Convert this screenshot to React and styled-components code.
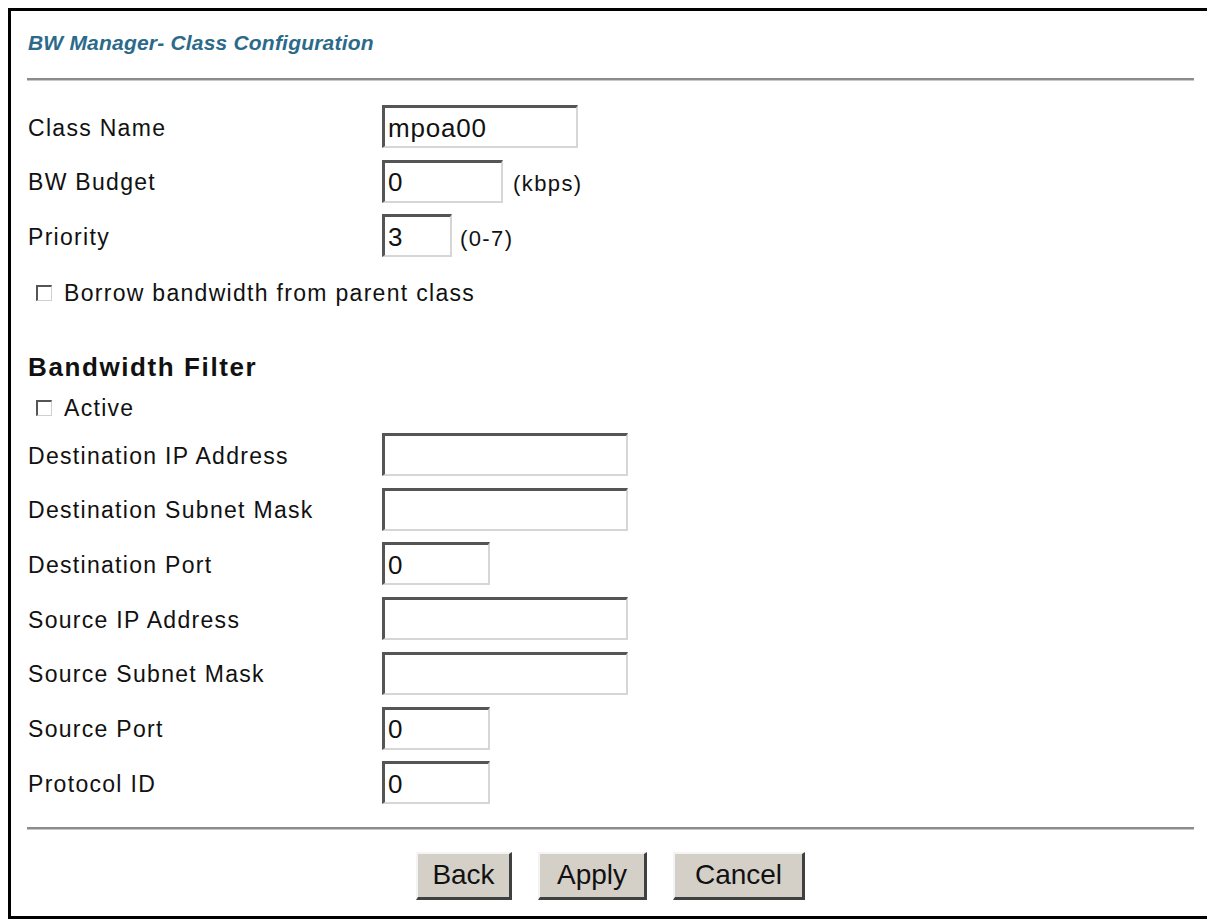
import React from 'react'
import styled, { createGlobalStyle } from 'styled-components'

const GlobalStyle = createGlobalStyle`
  body {
    margin: 8px;
    background: #fff;
    font-family: 'Liberation Sans', Arial, sans-serif;
    color: #111;
  }
`

const Frame = styled.div`
  border: 3px solid #000;
  box-sizing: border-box;
  height: 911px;
  padding: 20px 16px 0;
  width: 1205px;
`

const Title = styled.h1`
  color: #2b6a8a;
  font-size: 21px;
  font-style: italic;
  font-weight: bold;
  letter-spacing: 0.2px;
  line-height: 24px;
  margin: 0 0 0 1px;
`

const Rule = styled.div`
  background: #8c8c8c;
  border-bottom: 1px solid #c8c8c8;
  height: 2px;
  margin: ${({ $top }) => $top}px 0 0;
`

const Form = styled.div`
  display: flex;
  flex-direction: column;
  padding-top: 24px;
`

const FieldRow = styled.div`
  align-items: center;
  display: grid;
  grid-template-columns: 355px auto;
  height: 43px;
  margin-bottom: 11.7px;
`

const Label = styled.span`
  font-size: 23px;
  letter-spacing: 1.3px;
  padding: ${({ $drop }) => ($drop ? '3px' : '0')} 0 0 1px;
`

const InputWrap = styled.div`
  align-items: center;
  display: flex;
  gap: ${({ $gap }) => $gap || 10}px;
`

const TextBox = styled.input`
  background: #fff;
  border-bottom: 2px solid #d6d6d6;
  border-left: 3px solid #555;
  border-right: 2px solid #d6d6d6;
  border-top: 3px solid #555;
  box-sizing: border-box;
  color: #111;
  font-family: 'Liberation Sans', Arial, sans-serif;
  font-size: 26px;
  height: 43px;
  letter-spacing: 0.8px;
  margin: 0;
  outline: none;
  padding: 2px 2px 0 3px;
  width: ${({ $w }) => $w}px;
`

const Unit = styled.span`
  font-size: 22px;
  letter-spacing: 1.4px;
  padding-top: 6px;
`

const CheckRow = styled.label`
  align-items: center;
  display: flex;
  gap: 11px;
  height: 24px;
  margin: ${({ $m }) => $m};
  padding-left: 9px;
`

const Box = styled.span`
  background: #fff;
  border-bottom: 1px solid #d0d0d0;
  border-left: 2px solid #555;
  border-right: 1px solid #d0d0d0;
  border-top: 2px solid #555;
  box-sizing: border-box;
  display: inline-block;
  flex: none;
  height: 16px;
  width: 16px;
`

const Section = styled.h2`
  font-size: 26px;
  font-weight: bold;
  height: 28px;
  letter-spacing: 1.6px;
  line-height: 28px;
  margin: 48px 0 15px 1px;
`

const Buttons = styled.div`
  display: flex;
  gap: 26px;
  justify-content: center;
  margin-top: 22px;
`

const Button = styled.button`
  background: #d4d0c8;
  border-bottom: 3px solid #404040;
  border-left: 2px solid #f4f4f4;
  border-right: 3px solid #404040;
  border-top: 2px solid #f4f4f4;
  box-sizing: border-box;
  color: #111;
  font-family: 'Liberation Sans', Arial, sans-serif;
  font-size: 28px;
  height: 48px;
  padding: 0;
  width: ${({ $w }) => $w}px;
`

const fields = [
  { label: 'Destination IP Address', w: 246 },
  { label: 'Destination Subnet Mask', w: 246 },
  { label: 'Destination Port', w: 108, value: '0' },
  { label: 'Source IP Address', w: 246 },
  { label: 'Source Subnet Mask', w: 246 },
  { label: 'Source Port', w: 108, value: '0' },
  { label: 'Protocol ID', w: 108, value: '0' }
]

const App = () => (
  <>
    <GlobalStyle />
    <Frame>
      <Title>BW Manager- Class Configuration</Title>
      <Rule $top={23} />
      <Form>
        <FieldRow>
          <Label $drop>Class Name</Label>
          <InputWrap><TextBox $w={196} defaultValue="mpoa00" /></InputWrap>
        </FieldRow>
        <FieldRow>
          <Label $drop>BW Budget</Label>
          <InputWrap><TextBox $w={121} defaultValue="0" /><Unit>(kbps)</Unit></InputWrap>
        </FieldRow>
        <FieldRow>
          <Label $drop>Priority</Label>
          <InputWrap $gap={8}><TextBox $w={70} defaultValue="3" /><Unit>(0-7)</Unit></InputWrap>
        </FieldRow>
        <CheckRow $m="12px 0 0">
          <Box />
          <Label>Borrow bandwidth from parent class</Label>
        </CheckRow>
        <Section>Bandwidth Filter</Section>
        <CheckRow $m="0 0 13px">
          <Box />
          <Label>Active</Label>
        </CheckRow>
        {fields.map(f => (
          <FieldRow key={f.label}>
            <Label $drop>{f.label}</Label>
            <InputWrap><TextBox $w={f.w} defaultValue={f.value || ''} /></InputWrap>
          </FieldRow>
        ))}
      </Form>
      <Rule $top={11} />
      <Buttons>
        <Button $w={96}>Back</Button>
        <Button $w={109}>Apply</Button>
        <Button $w={132}>Cancel</Button>
      </Buttons>
    </Frame>
  </>
)

export default App
